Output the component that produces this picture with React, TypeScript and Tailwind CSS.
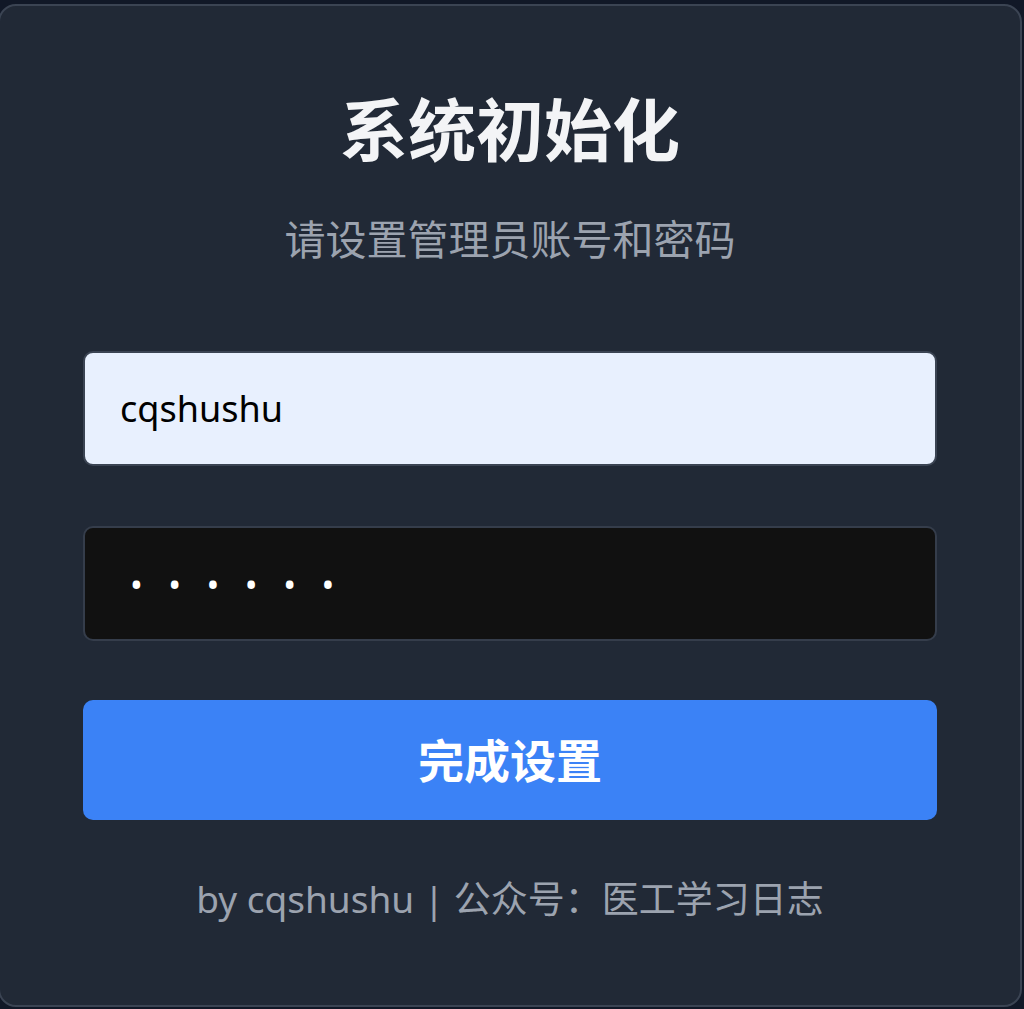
import { useState } from "react";

const font = { fontFamily: '"Noto Sans", "Noto Sans CJK SC", sans-serif' };

const App = () => {
  const [username, setUsername] = useState("cqshushu");
  const [password, setPassword] = useState("123456");

  return (
    <div
      className="h-[1009px] w-full overflow-hidden bg-[#111827] pt-[4px]"
      style={font}
    >
      <div className="ml-[-2px] mr-[2px] h-[1003px] rounded-[18px] border-2 border-[#3b4453] bg-[#212936] px-[83px] pt-[83px]">
        {/* Header */}
        <h1 className="text-center text-[68px] font-bold leading-[82px] text-[#f3f4f6]">
          系统初始化
        </h1>
        <p className="mt-[40px] text-center text-[41px] leading-[56px] text-[#9ca3af]">
          请设置管理员账号和密码
        </p>

        {/* Form */}
        <form className="mt-[84px] flex flex-col" onSubmit={(e) => e.preventDefault()}>
          <input
            type="text"
            value={username}
            onChange={(e) => setUsername(e.target.value)}
            className="h-[115px] w-full rounded-[10px] border-2 border-[#3b4453] bg-[#e8f0fe] px-[35px] text-[36px] text-black outline-none"
          />
          <input
            type="password"
            value={password}
            onChange={(e) => setPassword(e.target.value)}
            className="mt-[60px] h-[115px] w-full rounded-[10px] border-2 border-[#353d4b] bg-[#111111] px-[45px] text-[34px] tracking-[25.5px] text-white outline-none"
          />
          <button
            type="submit"
            className="mt-[59px] h-[120px] w-full rounded-[10px] bg-[#3b82f6] text-[46px] font-bold text-white"
          >
            完成设置
          </button>
        </form>

        <p className="mt-[53px] text-center text-[37px] leading-[52px] text-[#9ca3af]">
          by cqshushu | 公众号：医工学习日志
        </p>
      </div>
    </div>
  );
};

export default App;
